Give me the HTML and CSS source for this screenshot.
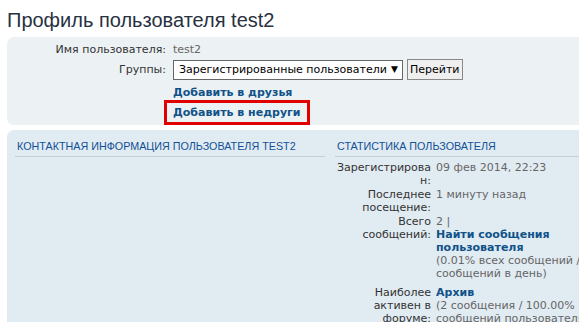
FILE: index.html
```html
<!DOCTYPE html>
<html lang="ru">
<head>
  <meta charset="UTF-8">
  <title>Профиль пользователя test2</title>
  <link rel="stylesheet" href="styles.css">
</head>
<body>

  <h2 class="titulo">Профиль пользователя test2</h2>

  <div class="panel panel-claro">
    <dl class="detalles">
      <dt>Имя пользователя:</dt>
      <dd class="gris">test2</dd>

      <dt class="alto">Группы:</dt>
      <dd class="alto">
        <div class="selector">
          <span>Зарегистрированные пользователи</span>
          <span class="flecha">▼</span>
        </div>
        <button class="boton">Перейти</button>
      </dd>

      <dt></dt>
      <dd><a href="#" class="enlace">Добавить в друзья</a></dd>

      <dt></dt>
      <dd class="marcado"><a href="#" class="enlace">Добавить в недруги</a></dd>
    </dl>
  </div>

  <div class="panel panel-oscuro">
    <div class="columna izquierda">
      <h3>Контактная информация пользователя test2</h3>
    </div>
    <div class="columna derecha">
      <h3>Статистика пользователя</h3>
      <dl class="estadisticas">
        <div class="fila">
          <dt>Зарегистрирован:</dt>
          <dd class="gris">09 фев 2014, 22:23</dd>
        </div>
        <div class="fila">
          <dt>Последнее посещение:</dt>
          <dd class="gris">1 минуту назад</dd>
        </div>
        <div class="fila">
          <dt>Всего сообщений:</dt>
          <dd class="gris">2 |<br><a href="#" class="enlace">Найти сообщения пользователя</a><br>(0.01% всех сообщений / 0.00 сообщений в день)</dd>
        </div>
        <div class="fila separada">
          <dt>Наиболее активен в форуме:</dt>
          <dd class="gris"><a href="#" class="enlace">Архив</a><br>(2 сообщения / 100.00% сообщений пользователя)</dd>
        </div>
      </dl>
    </div>
  </div>

</body>
</html>
```

FILE: styles.css
```css
:root {
  --claro: #ecf1f3;
  --oscuro: #e1ebf2;
  --enlace: #105289;
  --titulo: #115098;
  --texto: #333;
  --gris: #666;
}

* {
  box-sizing: border-box;
}

html, body {
  overflow: hidden;
}

body {
  margin: 0;
  padding: 0 0 0 7px;
  width: 760px;
  font-family: "DejaVu Sans", Verdana, sans-serif;
  font-size: 11px;
  color: var(--texto);
  background: white;
}

.titulo {
  margin: 0;
  padding-top: 8px;
  height: 37px;
  font-family: "Liberation Sans", Arial, sans-serif;
  font-weight: normal;
  font-size: 20px;
  line-height: 24px;
  color: #28313f;
}

.panel {
  border-radius: 7px;
  padding: 0 8px;
}

.panel-claro {
  background: var(--claro);
  height: 88px;
  padding-top: 4px;
}

.panel-oscuro {
  background: var(--oscuro);
  margin-top: 5px;
  height: 400px;
  display: flex;
  gap: 10px;
  padding-top: 8px;
}

.detalles {
  margin: 0;
  display: grid;
  grid-template-columns: 151px auto;
  column-gap: 7px;
  row-gap: 0;
  line-height: 13px;
  width: 520px;
}

.detalles dt {
  text-align: right;
  padding-top: 2px;
}

.detalles dd {
  margin: 0;
  padding-top: 2px;
  display: flex;
  align-items: center;
  gap: 4px;
}

.detalles dt.alto {
  padding-top: 7px;
}

.detalles dd.alto {
  padding-top: 3px;
  padding-bottom: 4px;
}

.gris {
  color: var(--gris);
}

.selector {
  width: 230px;
  height: 20px;
  border: 1px solid #666;
  background: white;
  color: #000;
  display: flex;
  align-items: center;
  justify-content: space-between;
  padding: 0 4px 0 5px;
  font-size: 11px;
}

.flecha {
  font-size: 9px;
}

.boton {
  height: 21px;
  padding: 0 2px;
  background: #efefef;
  border: 1px solid #888;
  font-family: "DejaVu Sans", Verdana, sans-serif;
  font-size: 11px;
  color: #000;
}

.enlace {
  color: var(--enlace);
  font-weight: bold;
  text-decoration: none;
}

.detalles dd.marcado {
  margin: 1px 0 0 -9px;
  padding: 3px 6px 3px 6px;
  border: 3px solid #e10000;
  width: fit-content;
}

.columna h3 {
  margin: 0;
  font-family: "Liberation Sans", Arial, sans-serif;
  font-size: 10.75px;
  font-weight: normal;
  text-transform: uppercase;
  color: var(--titulo);
  padding: 2px 2px 4px;
  border-bottom: 1px solid #c8cdd2;
}

.izquierda {
  width: 310px;
}

.derecha {
  width: 300px;
}

.estadisticas {
  margin: 4px 0 0;
  line-height: 13px;
}

.fila {
  display: flex;
  gap: 5px;
  margin-bottom: 1px;
}

.fila.separada {
  margin-top: 6px;
}

.estadisticas dt {
  width: 96px;
  text-align: right;
  overflow-wrap: anywhere;
}

.estadisticas dd {
  margin: 0;
  width: 180px;
}
```
